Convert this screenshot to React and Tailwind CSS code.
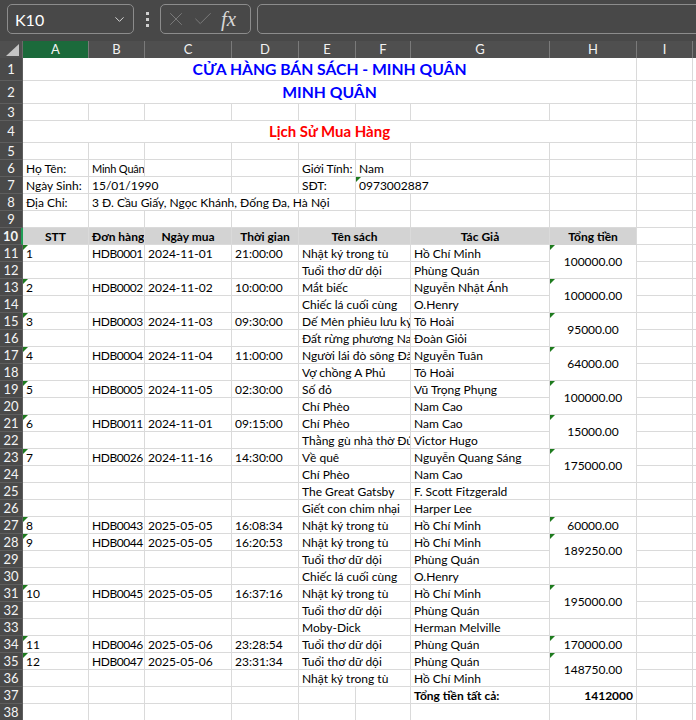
import { ChevronDown, X, Check } from "lucide-react";

const rows = [
  { r: 11, stt: "1", id: "HDB0001", date: "2024-11-01", time: "21:00:00", title: "Nhật ký trong tù", author: "Hồ Chí Minh", total: "100000.00", span: 2 },
  { r: 12, title: "Tuổi thơ dữ dội", author: "Phùng Quán", skip: true },
  { r: 13, stt: "2", id: "HDB0002", date: "2024-11-02", time: "10:00:00", title: "Mắt biếc", author: "Nguyễn Nhật Ánh", total: "100000.00", span: 2 },
  { r: 14, title: "Chiếc lá cuối cùng", author: "O.Henry", skip: true },
  { r: 15, stt: "3", id: "HDB0003", date: "2024-11-03", time: "09:30:00", title: "Dế Mèn phiêu lưu ký", author: "Tô Hoài", total: "95000.00", span: 2 },
  { r: 16, title: "Đất rừng phương Nam", author: "Đoàn Giỏi", skip: true },
  { r: 17, stt: "4", id: "HDB0004", date: "2024-11-04", time: "11:00:00", title: "Người lái đò sông Đà", author: "Nguyễn Tuân", total: "64000.00", span: 2 },
  { r: 18, title: "Vợ chồng A Phủ", author: "Tô Hoài", skip: true },
  { r: 19, stt: "5", id: "HDB0005", date: "2024-11-05", time: "02:30:00", title: "Số đỏ", author: "Vũ Trọng Phụng", total: "100000.00", span: 2 },
  { r: 20, title: "Chí Phèo", author: "Nam Cao", skip: true },
  { r: 21, stt: "6", id: "HDB0011", date: "2024-11-01", time: "09:15:00", title: "Chí Phèo", author: "Nam Cao", total: "15000.00", span: 2 },
  { r: 22, title: "Thằng gù nhà thờ Đức Bà", author: "Victor Hugo", skip: true },
  { r: 23, stt: "7", id: "HDB0026", date: "2024-11-16", time: "14:30:00", title: "Về quê", author: "Nguyễn Quang Sáng", total: "175000.00", span: 2 },
  { r: 24, title: "Chí Phèo", author: "Nam Cao", skip: true },
  { r: 25, title: "The Great Gatsby", author: "F. Scott Fitzgerald" },
  { r: 26, title: "Giết con chim nhại", author: "Harper Lee" },
  { r: 27, stt: "8", id: "HDB0043", date: "2025-05-05", time: "16:08:34", title: "Nhật ký trong tù", author: "Hồ Chí Minh", total: "60000.00", span: 1 },
  { r: 28, stt: "9", id: "HDB0044", date: "2025-05-05", time: "16:20:53", title: "Nhật ký trong tù", author: "Hồ Chí Minh", total: "189250.00", span: 2 },
  { r: 29, title: "Tuổi thơ dữ dội", author: "Phùng Quán", skip: true },
  { r: 30, title: "Chiếc lá cuối cùng", author: "O.Henry" },
  { r: 31, stt: "10", id: "HDB0045", date: "2025-05-05", time: "16:37:16", title: "Nhật ký trong tù", author: "Hồ Chí Minh", total: "195000.00", span: 2 },
  { r: 32, title: "Tuổi thơ dữ dội", author: "Phùng Quán", skip: true },
  { r: 33, title: "Moby-Dick", author: "Herman Melville" },
  { r: 34, stt: "11", id: "HDB0046", date: "2025-05-06", time: "23:28:54", title: "Tuổi thơ dữ dội", author: "Phùng Quán", total: "170000.00", span: 1 },
  { r: 35, stt: "12", id: "HDB0047", date: "2025-05-06", time: "23:31:34", title: "Tuổi thơ dữ dội", author: "Phùng Quán", total: "148750.00", span: 2 },
  { r: 36, title: "Nhật ký trong tù", author: "Hồ Chí Minh", skip: true },
];

function Flag() {
  return (
    <span className="absolute left-0 top-0 h-0 w-0 border-t-[5px] border-r-[5px] border-t-[#1e7b1e] border-r-transparent" />
  );
}

function Cell({ children, span = 1, rows = 1, flag = false, className = "" }) {
  return (
    <td
      colSpan={span}
      rowSpan={rows}
      className={`relative overflow-hidden whitespace-nowrap border-r border-b border-[#dadada] p-0 px-[3px] align-bottom ${className}`}
    >
      {flag && <Flag />}
      {children}
    </td>
  );
}

function RowHead({ n, active = false }) {
  return (
    <td
      className={`border-b border-b-[#5e5e5e] bg-[#4a4a4a] p-0 text-center align-middle text-[13px] text-[#f4f4f4] ${active ? "border-r-2 border-r-[#1f9d55]" : "border-r border-r-[#5e5e5e]"}`}
    >
      {n}
    </td>
  );
}

function Empty() {
  return Array.from({ length: 10 }, (_, i) => <Cell key={i} />);
}

export default function App() {
  return (
    <div className="h-[720px] w-[696px] overflow-hidden bg-white font-[Lato,'Noto_Sans',sans-serif] text-[12px] leading-[15px] text-black">
      {/* formula bar */}
      <div className="flex h-[41px] items-start gap-[6px] bg-[#484848] pl-[7px] pt-[4px]">
        <div className="flex h-[30px] w-[127px] shrink-0 items-center justify-between rounded-[5px] border border-[#8c8c8c] pl-[7px] pr-[6px]">
          <span className="text-[16px] text-white">K10</span>
          <ChevronDown size={15} strokeWidth={1.6} className="text-[#d8d8d8]" />
        </div>
        <div className="flex h-[30px] w-[14px] shrink-0 flex-col items-center justify-center gap-[3px]">
          <span className="h-[3px] w-[3px] bg-[#d0d0d0]" />
          <span className="h-[3px] w-[3px] bg-[#d0d0d0]" />
          <span className="h-[3px] w-[3px] bg-[#d0d0d0]" />
        </div>
        <div className="flex h-[30px] w-[91px] shrink-0 items-center gap-[5px] rounded-[5px] border border-[#8c8c8c] pl-[4px]">
          <X size={22} strokeWidth={1} className="text-[#7e7e7e]" />
          <Check size={22} strokeWidth={1} className="text-[#7e7e7e]" />
          <span className="ml-[2px] font-['Liberation_Serif',serif] text-[21px] italic text-[#d6d6d6]">fx</span>
        </div>
        <div className="h-[30px] w-[480px] shrink-0 rounded-[5px] border border-[#8c8c8c]" />
      </div>

      <table className="w-[752px] table-fixed border-separate border-spacing-0">
        <colgroup>
          <col className="w-[23px]" />
          <col className="w-[66px]" />
          <col className="w-[56px]" />
          <col className="w-[87px]" />
          <col className="w-[67px]" />
          <col className="w-[57px]" />
          <col className="w-[55px]" />
          <col className="w-[139px]" />
          <col className="w-[87px]" />
          <col className="w-[56px]" />
          <col className="w-[60px]" />
        </colgroup>
        <thead>
          <tr className="h-[17px] text-[13px] font-normal text-[#f2f2f2]">
            <th className="relative border-r border-[#6a6a6a] bg-[#4f4f4f] p-0">
              <svg width="13" height="12" viewBox="0 0 13 12" className="absolute right-[3px] bottom-[2px]">
                <polygon points="13,0 13,12 0,12" fill="#c4c4c4" />
              </svg>
            </th>
            <th className="border-r border-[#7a7a7a] bg-[#1b6a3b] p-0 font-normal">A</th>
            <th className="border-r border-[#7a7a7a] bg-[#4f4f4f] p-0 font-normal">B</th>
            <th className="border-r border-[#7a7a7a] bg-[#4f4f4f] p-0 font-normal">C</th>
            <th className="border-r border-[#7a7a7a] bg-[#4f4f4f] p-0 font-normal">D</th>
            <th className="border-r border-[#7a7a7a] bg-[#4f4f4f] p-0 font-normal">E</th>
            <th className="border-r border-[#7a7a7a] bg-[#4f4f4f] p-0 font-normal">F</th>
            <th className="border-r border-[#7a7a7a] bg-[#4f4f4f] p-0 font-normal">G</th>
            <th className="border-r border-[#7a7a7a] bg-[#4f4f4f] p-0 font-normal">H</th>
            <th className="border-r border-[#7a7a7a] bg-[#4f4f4f] p-0 font-normal">I</th>
            <th className="border-r border-[#7a7a7a] bg-[#4f4f4f] p-0 font-normal">J</th>
          </tr>
        </thead>
        <tbody>
          <tr className="h-[23px]">
            <RowHead n={1} />
            <Cell span={8} className="text-center align-middle text-[15.7px] font-bold text-[#0000ff]">
              CỬA HÀNG BÁN SÁCH - MINH QUÂN
            </Cell>
            <Cell />
            <Cell />
          </tr>
          <tr className="h-[23px]">
            <RowHead n={2} />
            <Cell span={8} className="text-center align-middle text-[15.7px] font-bold text-[#0000ff]">
              MINH QUÂN
            </Cell>
            <Cell />
            <Cell />
          </tr>
          <tr className="h-[17px]">
            <RowHead n={3} />
            <Empty />
          </tr>
          <tr className="h-[22px]">
            <RowHead n={4} />
            <Cell span={8} className="text-center align-middle text-[15px] font-bold text-[#ff0000]">
              Lịch Sử Mua Hàng
            </Cell>
            <Cell />
            <Cell />
          </tr>
          <tr className="h-[17px]">
            <RowHead n={5} />
            <Empty />
          </tr>
          <tr className="h-[17px]">
            <RowHead n={6} />
            <Cell>Họ Tên:</Cell>
            <Cell className="px-[2px] text-[11px] tracking-[-0.2px]">Minh Quân</Cell>
            <Cell />
            <Cell />
            <Cell>Giới Tính:</Cell>
            <Cell>Nam</Cell>
            <Cell />
            <Cell />
            <Cell />
            <Cell />
          </tr>
          <tr className="h-[17px]">
            <RowHead n={7} />
            <Cell>Ngày Sinh:</Cell>
            <Cell span={2}>15/01/1990</Cell>
            <Cell />
            <Cell>SĐT:</Cell>
            <Cell span={2} flag>0973002887</Cell>
            <Cell />
            <Cell />
            <Cell />
          </tr>
          <tr className="h-[17px]">
            <RowHead n={8} />
            <Cell>Địa Chỉ:</Cell>
            <Cell span={4}>3 Đ. Cầu Giấy, Ngọc Khánh, Đống Đa, Hà Nội</Cell>
            <Cell />
            <Cell />
            <Cell />
            <Cell />
            <Cell />
          </tr>
          <tr className="h-[17px]">
            <RowHead n={9} />
            <Empty />
          </tr>
          <tr className="h-[17px] font-bold">
            <RowHead n={10} active />
            <Cell className="border-[#d3d3d3] bg-[#d3d3d3] text-center">STT</Cell>
            <Cell className="border-[#d3d3d3] bg-[#d3d3d3] text-center">Đơn hàng</Cell>
            <Cell className="border-[#d3d3d3] bg-[#d3d3d3] text-center">Ngày mua</Cell>
            <Cell className="border-[#d3d3d3] bg-[#d3d3d3] text-center">Thời gian</Cell>
            <Cell span={2} className="border-[#d3d3d3] bg-[#d3d3d3] text-center">Tên sách</Cell>
            <Cell className="border-[#d3d3d3] bg-[#d3d3d3] text-center">Tác Giả</Cell>
            <Cell className="border-b-[#d3d3d3] bg-[#d3d3d3] text-center">Tổng tiền</Cell>
            <Cell className="font-normal" />
            <Cell className="font-normal" />
          </tr>
          {rows.map((row) => (
            <tr key={row.r} className="h-[17px]">
              <RowHead n={row.r} />
              <Cell flag={!!row.stt}>{row.stt}</Cell>
              <Cell className="px-[2px] tracking-[-0.45px]">{row.id}</Cell>
              <Cell>{row.date}</Cell>
              <Cell>{row.time}</Cell>
              <Cell span={2}>{row.title}</Cell>
              <Cell>{row.author}</Cell>
              {row.total ? (
                <Cell rows={row.span} flag className="text-center align-middle">
                  {row.total}
                </Cell>
              ) : row.skip ? null : (
                <Cell />
              )}
              <Cell />
              <Cell />
            </tr>
          ))}
          <tr className="h-[17px]">
            <RowHead n={37} />
            <Cell />
            <Cell />
            <Cell />
            <Cell />
            <Cell />
            <Cell />
            <Cell className="font-bold">Tổng tiền tất cả:</Cell>
            <Cell className="text-right font-bold">1412000</Cell>
            <Cell />
            <Cell />
          </tr>
          <tr className="h-[17px]">
            <RowHead n={38} />
            <Empty />
          </tr>
        </tbody>
      </table>
    </div>
  );
}
